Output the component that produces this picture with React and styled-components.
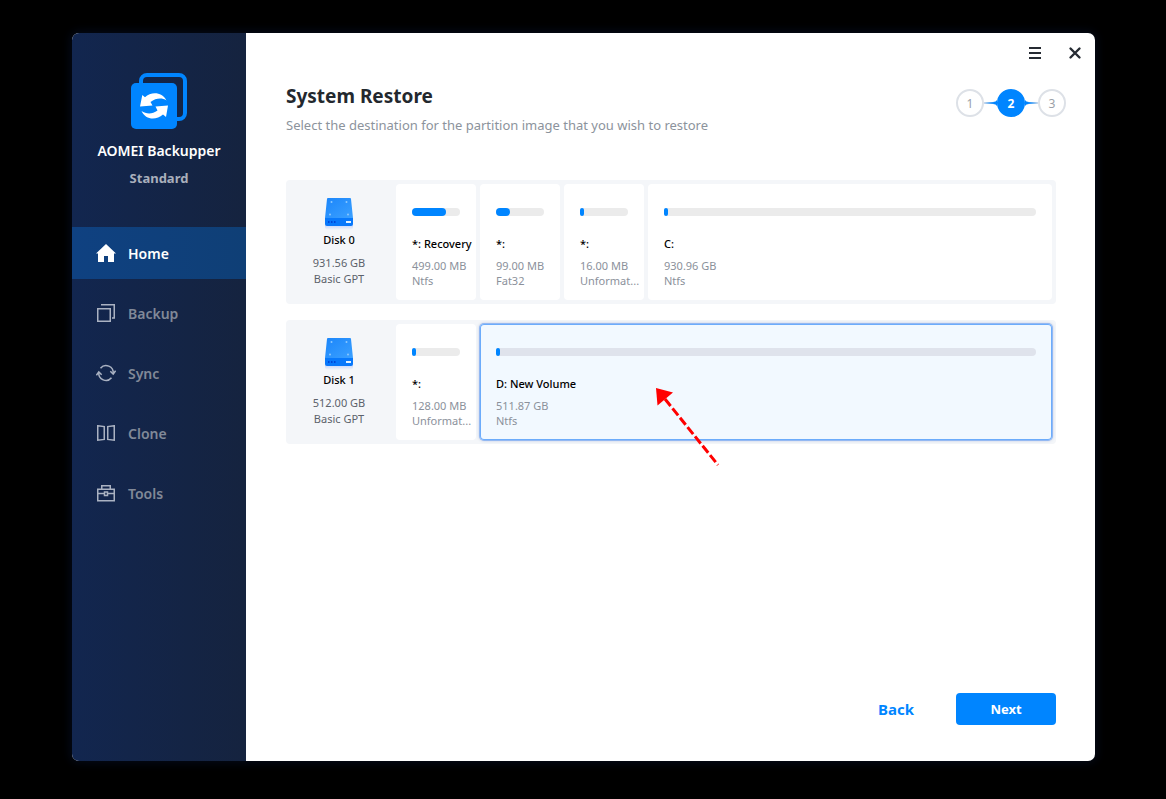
import React, { useState } from 'react'
import styled, { createGlobalStyle, css } from 'styled-components'

const GlobalStyle = createGlobalStyle`
    * {
        box-sizing: border-box;
    }

    body {
        margin: 0;
        background: #000;
        font-family: "Noto Sans", "Open Sans", sans-serif;
    }

    button {
        padding: 0;
        border: 0;
        background: none;
        font-family: inherit;
        cursor: pointer;
    }

    h1, h2, p {
        margin: 0;
    }

    svg {
        display: block;
    }
`

const Page = styled.div`
    display: flex;
    min-height: 100vh;
    padding: 33px 71px 38px 72px;
`

const Window = styled.div`
    display: flex;
    flex: 1;
    background: #fff;
    border-radius: 7px;
    overflow: hidden;
    box-shadow: 0 0 10px 2px #040a18;
`

const Sidebar = styled.aside`
    width: 174px;
    flex-shrink: 0;
    background: linear-gradient(90deg, #12264f, #15233f);
`

const Brand = styled.div`
    display: flex;
    flex-direction: column;
    align-items: center;
    padding-top: 40px;
`

const BrandName = styled.p`
    margin-top: 12px;
    font-size: 14px;
    font-weight: 600;
    line-height: 20px;
    color: #fff;
`

const Edition = styled.p`
    margin-top: 7px;
    font-size: 13px;
    font-weight: 700;
    line-height: 20px;
    color: #a9afbc;
`

const Nav = styled.nav`
    display: flex;
    flex-direction: column;
    gap: 8px;
    margin-top: 39px;
`

const NavLink = styled.a`
    display: flex;
    align-items: center;
    gap: 12px;
    height: 52px;
    padding-left: 24px;
    font-size: 14px;
    font-weight: 600;
    text-decoration: none;
    color: #818998;

    svg {
        color: #aab2c2;
    }

    ${({ $active }) => $active && css`
        background: linear-gradient(90deg, #0f4181, #0f3f76);
        color: #fff;

        svg {
            color: #fff;
        }
    `}
`

const Main = styled.main`
    display: flex;
    flex-direction: column;
    flex: 1;
    min-width: 0;
`

const TopBar = styled.div`
    display: flex;
    justify-content: flex-end;
    gap: 24px;
    padding: 12px 12px 0;
`

const IconButton = styled.button`
    width: 16px;
    height: 16px;
    color: #262b33;
`

const Header = styled.header`
    display: flex;
    justify-content: space-between;
    align-items: flex-start;
    padding: 23px 29px 0 40px;
`

const Title = styled.h1`
    font-size: 19px;
    font-weight: 700;
    line-height: 24px;
    color: #23282e;
`

const Subtitle = styled.p`
    margin-top: 8px;
    font-size: 13px;
    line-height: 18px;
    color: #8c939c;
`

const Steps = styled.ol`
    display: flex;
    align-items: center;
    margin: 5px 0 0;
    padding: 0;
    list-style: none;
`

const Step = styled.li`
    display: flex;
    align-items: center;
    justify-content: center;
    width: 28px;
    height: 28px;
    border: 2px solid ${({ $current }) => ($current ? '#0085ff' : '#dde1e7')};
    border-radius: 50%;
    background: ${({ $current }) => ($current ? '#0085ff' : '#fff')};
    font-size: 12px;
    font-weight: ${({ $current }) => ($current ? 700 : 400)};
    color: ${({ $current }) => ($current ? '#fff' : '#9a9fa8')};
`

const Disks = styled.div`
    display: flex;
    flex-direction: column;
    gap: 16px;
    margin-top: 46px;
    padding: 0 39px 0 40px;
`

const DiskRow = styled.section`
    position: relative;
    display: flex;
    gap: 4px;
    padding: 4px;
    border-radius: 4px;
    background: #f4f6f9;
`

const DiskInfo = styled.div`
    display: flex;
    flex-direction: column;
    align-items: center;
    width: 102px;
    padding: 12px 4px 0 0;
    font-size: 11px;
    line-height: 16px;
    color: #5c626b;
`

const DiskName = styled.h2`
    margin: 0 0 7px;
    font-size: 11px;
    font-weight: 500;
    line-height: 16px;
    color: #000;
`

const Partition = styled.button`
    display: flex;
    flex-direction: column;
    width: 80px;
    height: 116px;
    padding: 24px 0 0 16px;
    border-radius: 4px;
    background: #fff;
    font-size: 11px;
    line-height: 15px;
    text-align: left;
    white-space: nowrap;
    color: #8b919b;

    ${({ $wide }) => $wide && css`
        flex: 1;
    `}

    ${({ $selected }) => $selected && css`
        background: #f2f9ff;
        box-shadow: inset 0 0 0 1px #6cacfb, 0 0 0 1px #93b8f2, 0 0 3px 1px #c2cde4;
    `}
`

const Track = styled.span`
    align-self: stretch;
    height: 8px;
    margin-right: 16px;
    border-radius: 4px;
    background: ${({ $selected }) => ($selected ? '#dfe3ec' : '#ebebeb')};
`

const Used = styled.span`
    display: block;
    height: 8px;
    min-width: 4px;
    border-radius: 4px;
    background: #0085ff;
`

const PartitionName = styled.span`
    margin: 20px 0 6px;
    font-weight: 500;
    line-height: 16px;
    color: #000;
`

const Pointer = styled.svg`
    position: absolute;
    top: 66px;
    left: 370px;
    pointer-events: none;
`

const Footer = styled.footer`
    display: flex;
    justify-content: flex-end;
    gap: 24px;
    margin-top: auto;
    padding: 24px 39px 36px 40px;
`

const BackButton = styled.button`
    width: 72px;
    height: 32px;
    font-size: 15px;
    font-weight: 700;
    color: #0085ff;
`

const NextButton = styled.button`
    width: 100px;
    height: 32px;
    border-radius: 4px;
    background: #0085ff;
    font-size: 13px;
    font-weight: 700;
    color: #fff;
`

const Logo = () => (
  <svg width="56" height="56" viewBox="0 0 56 56" fill="none">
    <path d="M10 12V8a6 6 0 0 1 6-6h32a6 6 0 0 1 6 6v32a6 6 0 0 1-6 6h-4" stroke="#0085ff" strokeWidth="4" />
    <rect y="10" width="46" height="46" rx="5" fill="#0085ff" />
    <path d="M9 33.500L11.300 22L14 24.200C20 18.500 31 18.500 35.500 27.500C31 24.500 25 25 19.500 29L21.500 32.500Z" fill="#fff" />
    <path d="M37 32.500L35 44L32 41.600C25 47.500 14.500 47 10.500 38C15 41 21 41.500 26.500 37.500L24.500 33.500Z" fill="#fff" />
  </svg>
)

const HomeIcon = () => (
  <svg width="20" height="20" viewBox="0 0 20 20" fill="currentColor">
    <path d="M10 1L20 10.500H18V19H12V13H8V19H2V10.500H0Z" />
  </svg>
)

const BackupIcon = () => (
  <svg width="20" height="20" viewBox="0 0 20 20" fill="none" stroke="currentColor" strokeWidth="1.500">
    <path d="M1.750 5.750h12.500v12.500H1.750zM5 1.750h13.250V15H16" />
  </svg>
)

const SyncIcon = () => (
  <svg width="20" height="20" viewBox="0 0 20 20" fill="none" stroke="currentColor" strokeWidth="1.500">
    <path d="M4.500 5.200A7.200 7.200 0 0 1 17.200 10.500M15.500 14.800A7.200 7.200 0 0 1 2.800 9.500" />
    <path d="M14.300 8.200l2.900 2.800 2.400-3.200M.4 12.200l2.400-3.200 2.900 2.800" />
  </svg>
)

const CloneIcon = () => (
  <svg width="20" height="20" viewBox="0 0 20 20" fill="none" stroke="currentColor" strokeWidth="1.500">
    <path d="M1.750 2.750L8.250 3.600V16.400L1.750 17.250zM18.250 2.750L11.750 3.600V16.400L18.250 17.250z" />
  </svg>
)

const ToolsIcon = () => (
  <svg width="20" height="20" viewBox="0 0 20 20" fill="none" stroke="currentColor" strokeWidth="1.500">
    <path d="M1.750 6.250h16.500v11.500H1.750zM5.750 6V2.750h8.500V6M2 10.500h6M12 10.500h6M8.500 9h3v3.500h-3z" />
  </svg>
)

const MenuIcon = () => (
  <svg width="16" height="16" viewBox="0 0 16 16" fill="currentColor">
    <path d="M2 2h12v2H2zM2 7h12v2H2zM2 12h12v2H2z" />
  </svg>
)

const CloseIcon = () => (
  <svg width="16" height="16" viewBox="0 0 16 16" fill="none" stroke="currentColor" strokeWidth="2.400">
    <path d="M3.500 3.500l9 9M12.500 3.500l-9 9" strokeLinecap="round" />
  </svg>
)

const Connector = ({ flip }) => (
  <svg width="13" height="8" viewBox="0 0 13 8">
    <linearGradient id={flip ? 'after' : 'before'} x1={flip ? 1 : 0} x2={flip ? 0 : 1}>
      <stop offset="0" stopColor="#cfdbea" />
      <stop offset="0.800" stopColor="#0085ff" />
    </linearGradient>
    <path
      d={flip ? 'M0 1Q1 3 4 3H13V5H4Q1 5 0 7Z' : 'M13 1Q12 3 9 3H0V5H9Q12 5 13 7Z'}
      fill={`url(#${flip ? 'after' : 'before'})`}
    />
  </svg>
)

const DriveIcon = ({ id }) => (
  <svg width="34" height="36" viewBox="0 0 34 36">
    <defs>
      <linearGradient id={`${id}-top`} x1="0" y1="0" x2="1" y2="1">
        <stop offset="0" stopColor="#1b86fb" />
        <stop offset="1" stopColor="#3ba0ff" />
      </linearGradient>
      <linearGradient id={`${id}-shade`} x1="0" y1="0" x2="0" y2="1">
        <stop offset="0" stopColor="#b9cdfb" />
        <stop offset="1" stopColor="#f4f6f9" />
      </linearGradient>
    </defs>
    <path d="M3 28h28v3q0 3-4 3H7q-4 0-4-3z" fill={`url(#${id}-shade)`} />
    <path d="M5 3q0-1 1-1h22q1 0 1 1l2 19H3z" fill={`url(#${id}-top)`} />
    <path d="M3 22h28v6q0 2-2 2H5q-2 0-2-2z" fill="#0878fb" />
    <path d="M6 25h1.500v2H6zM9 25h1.500v2H9zM12 25h1.500v2H12z" fill="#0046d8" />
    <path d="M24 25h5v2h-5z" fill="#e4f2ff" />
    <g fill="#8cc8ff">
      <circle cx="9.500" cy="6" r="1" />
      <circle cx="24.500" cy="6" r="1" />
      <circle cx="8" cy="18.500" r="1" />
      <circle cx="26" cy="18.500" r="1" />
    </g>
  </svg>
)

const navItems = [
  { label: 'Home', icon: <HomeIcon /> },
  { label: 'Backup', icon: <BackupIcon /> },
  { label: 'Sync', icon: <SyncIcon /> },
  { label: 'Clone', icon: <CloneIcon /> },
  { label: 'Tools', icon: <ToolsIcon /> },
]

const disks = [
  {
    id: 'disk0',
    name: 'Disk 0',
    size: '931.56 GB',
    type: 'Basic GPT',
    partitions: [
      { id: '0-1', name: '*: Recovery', size: '499.00 MB', fs: 'Ntfs', used: 71 },
      { id: '0-2', name: '*:', size: '99.00 MB', fs: 'Fat32', used: 29 },
      { id: '0-3', name: '*:', size: '16.00 MB', fs: 'Unformat...', used: 0 },
      { id: '0-4', name: 'C:', size: '930.96 GB', fs: 'Ntfs', used: 0, wide: true },
    ],
  },
  {
    id: 'disk1',
    name: 'Disk 1',
    size: '512.00 GB',
    type: 'Basic GPT',
    partitions: [
      { id: '1-1', name: '*:', size: '128.00 MB', fs: 'Unformat...', used: 0 },
      { id: '1-2', name: 'D: New Volume', size: '511.87 GB', fs: 'Ntfs', used: 0, wide: true },
    ],
  },
]

const App = () => {
  const [selected, setSelected] = useState('1-2')

  return (
    <>
      <GlobalStyle />
      <Page>
        <Window>
          <Sidebar>
            <Brand>
              <Logo />
              <BrandName>AOMEI Backupper</BrandName>
              <Edition>Standard</Edition>
            </Brand>
            <Nav>
              {navItems.map((item) => (
                <NavLink key={item.label} href="#" $active={item.label === 'Home'}>
                  {item.icon}
                  {item.label}
                </NavLink>
              ))}
            </Nav>
          </Sidebar>

          <Main>
            <TopBar>
              <IconButton aria-label="Menu"><MenuIcon /></IconButton>
              <IconButton aria-label="Close"><CloseIcon /></IconButton>
            </TopBar>

            <Header>
              <div>
                <Title>System Restore</Title>
                <Subtitle>Select the destination for the partition image that you wish to restore</Subtitle>
              </div>
              <Steps>
                <Step>1</Step>
                <Connector />
                <Step $current>2</Step>
                <Connector flip />
                <Step>3</Step>
              </Steps>
            </Header>

            <Disks>
              {disks.map((disk) => (
                <DiskRow key={disk.id}>
                  <DiskInfo>
                    <DriveIcon id={disk.id} />
                    <DiskName>{disk.name}</DiskName>
                    <span>{disk.size}</span>
                    <span>{disk.type}</span>
                  </DiskInfo>
                  {disk.partitions.map((part) => (
                    <Partition
                      key={part.id}
                      $wide={part.wide}
                      $selected={part.id === selected}
                      onClick={() => setSelected(part.id)}
                    >
                      <Track $selected={part.id === selected}>
                        <Used style={{ width: `${part.used}%` }} />
                      </Track>
                      <PartitionName>{part.name}</PartitionName>
                      <span>{part.size}</span>
                      <span>{part.fs}</span>
                    </Partition>
                  ))}
                  {disk.id === 'disk1' && (
                    <Pointer width="66" height="82" viewBox="0 0 66 82">
                      <path d="M0 2L17 6.500L1.500 19.500Z" fill="#f00" />
                      <path d="M9 13L62 79" stroke="#f00" strokeWidth="3" strokeDasharray="9 3" />
                    </Pointer>
                  )}
                </DiskRow>
              ))}
            </Disks>

            <Footer>
              <BackButton>Back</BackButton>
              <NextButton>Next</NextButton>
            </Footer>
          </Main>
        </Window>
      </Page>
    </>
  )
}

export default App
